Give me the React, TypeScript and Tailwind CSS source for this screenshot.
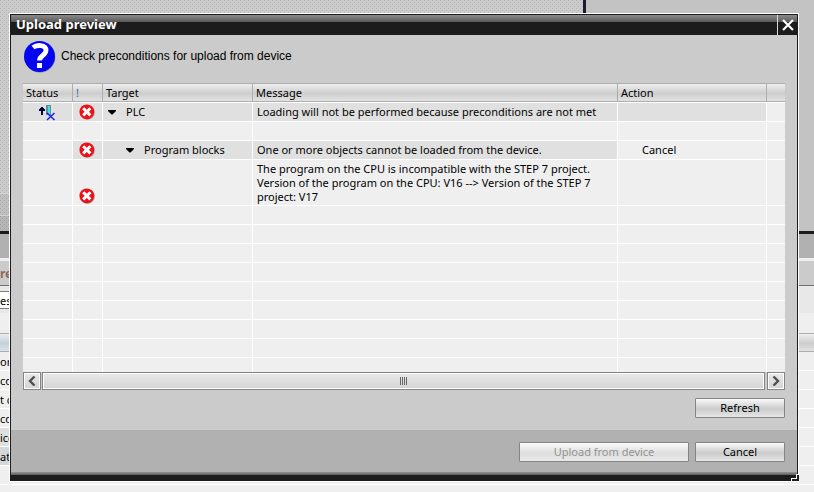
import React from "react";

const cellLine = "border-b border-r border-white";

function ErrorIcon() {
  return (
    <svg width="16" height="16" viewBox="0 0 16 16" role="img" aria-label="Error" className="block">
      <circle cx="8.5" cy="8.6" r="7.4" fill="#a9a9a9" />
      <circle cx="7.8" cy="7.8" r="7.4" fill="#ee1018" />
      <path d="M4.200 4.200l7.200 7.200M11.400 4.200l-7.200 7.200" stroke="#fff" strokeWidth="3" />
    </svg>
  );
}

function StatusIcon() {
  return (
    <svg width="17" height="17" viewBox="0 0 17 17" role="img" aria-label="Upload blocked" className="block">
      <path d="M2 3h2v1h1v1h1v2H4v4H2V7H0V5h1V4h1z" fill="#05053c" />
      <rect x="7" y="1" width="5" height="10" fill="#5f8f98" />
      <rect x="9" y="2" width="2" height="8" fill="#3fe0e8" />
      <path d="M8 9l7.500 7M15.500 9L8 16" stroke="#1d1de6" strokeWidth="1.500" />
    </svg>
  );
}

function Arrow() {
  return (
    <svg width="9" height="5" viewBox="0 0 9 5" aria-hidden="true" className="shrink-0">
      <path d="M0 0h8v1L4.500 4.500h-1L0 1z" fill="#000" />
    </svg>
  );
}

function Chevron({ right = false }: { right?: boolean }) {
  return (
    <svg width="8" height="10" viewBox="0 0 8 10" aria-hidden="true">
      <path d={right ? "M1.500 0.500L6 5 1.500 9.500" : "M6.500 0.500L2 5l4.500 4.500"} fill="none" stroke="#505050" strokeWidth="2.400" />
    </svg>
  );
}

type Item = {
  status?: boolean;
  error?: boolean;
  target?: string;
  nested?: boolean;
  message?: string;
  action?: string;
  shade?: "all" | "part";
  tall?: boolean;
};

const items: Item[] = [
  { status: true, error: true, target: "PLC", message: "Loading will not be performed because preconditions are not met", shade: "all" },
  {},
  { error: true, target: "Program blocks", nested: true, message: "One or more objects cannot be loaded from the device.", action: "Cancel", shade: "part" },
  {
    error: true,
    tall: true,
    message: "The program on the CPU is incompatible with the STEP 7 project.\nVersion of the program on the CPU: V16 --> Version of the STEP 7\nproject: V17",
  },
  {}, {}, {}, {}, {}, {}, {}, {}, {},
];

function Row({ item }: { item: Item }) {
  const shaded = item.shade ? "bg-[#e0e0e0]" : "";
  const whole = item.shade === "all" ? "bg-[#e0e0e0]" : "";
  return (
    <tr className={item.tall ? "h-[46px]" : "h-[19px]"}>
      <td className={`${cellLine} ${whole}`}>
        {item.status && <div className="flex h-[18px] items-center pl-4"><StatusIcon /></div>}
      </td>
      <td className={`${cellLine} ${shaded} align-bottom`}>
        {item.error && <div className="flex h-[18px] items-center pl-[6px]"><ErrorIcon /></div>}
      </td>
      <td className={`${cellLine} ${shaded}`}>
        {item.target && (
          <button type="button" aria-expanded="true" className={`flex h-[18px] items-center gap-[9px] whitespace-nowrap ${item.nested ? "pl-[23px]" : "pl-[5px]"}`}>
            <Arrow />
            {item.target}
          </button>
        )}
      </td>
      <td className={`${cellLine} ${shaded} overflow-hidden whitespace-pre pl-1 leading-[14px]`}>{item.message}</td>
      <td className={`${cellLine} ${whole} pl-6`}>{item.action}</td>
      <td className="border-b border-white" />
    </tr>
  );
}

const headCell =
  "border-y border-r border-[#aeaeae] bg-linear-to-b from-[#efefef] via-[#cdcdcd] via-55% to-[#e2e2e2] pt-px pl-[3px] text-left leading-4 font-normal";

function PreviewTable() {
  return (
    <div className="h-[289px] overflow-hidden bg-[#efefef]">
      <table className="w-full table-fixed border-separate border-spacing-0">
        <colgroup>
          <col className="w-[50px]" />
          <col className="w-[30px]" />
          <col className="w-[150px]" />
          <col />
          <col className="w-[149px]" />
          <col className="w-[18px]" />
        </colgroup>
        <thead>
          <tr className="h-[19px]">
            <th className={headCell}>Status</th>
            <th className={`${headCell} text-[#2f6ca8]`}>!</th>
            <th className={headCell}>Target</th>
            <th className={headCell}>Message</th>
            <th className={headCell}>Action</th>
            <th className="border-y border-[#aeaeae] bg-linear-to-b from-[#efefef] via-[#cdcdcd] via-55% to-[#e2e2e2]" />
          </tr>
        </thead>
        <tbody>
          <tr className="h-px">
            <td colSpan={6} className="bg-white" />
          </tr>
          {items.map((item, i) => (
            <Row key={i} item={item} />
          ))}
        </tbody>
      </table>
    </div>
  );
}

const scrollPart =
  "flex h-[18px] items-center justify-center border border-[#858585] bg-linear-to-b from-[#e9e9e9] to-[#d4d4d4] shadow-[inset_0_0_0_1px_#fff]";

const pushButton =
  "h-5 rounded-[1px] border border-[#858585] bg-linear-to-b from-[#fafafa] via-[#cbcbcb] via-55% to-[#e6e6e6] leading-[16px]";

const titleShade = "bg-[linear-gradient(#8d8a8c,#5a5a5a_7px,#1c1c1c_7px)]";

const backRows = [
  { text: "on", tone: "bg-[#efefef]" },
  { text: "co", tone: "bg-[#efefef]" },
  { text: "t c", tone: "bg-[#efefef]" },
  { text: "co", tone: "bg-[#efefef]" },
  { text: "ice", tone: "bg-[#e0dfe0]" },
  { text: "at", tone: "bg-[#d2d7db]" },
  { text: "", tone: "bg-[#efefef]" },
];

function Backdrop() {
  return (
    <div aria-hidden="true" className="absolute inset-0 flex flex-col overflow-hidden bg-[#efefef]">
      <div className="flex h-[231px] shrink-0 bg-[#c3c3c3]">
        <div className="flex w-[583px] flex-col bg-[#cbcbcb] bg-[conic-gradient(at_1px_1px,transparent_75%,#b2b2b2_0),conic-gradient(at_1px_1px,transparent_75%,#b2b2b2_0)] bg-size-[4px_4px] bg-position-[0_0,2px_2px]">
          <div className="h-[194px] border-b border-[#d8d8d8]" />
          <div className="h-[22px] border-b border-[#d2d2d2] bg-black/5" />
          <div className="grow bg-black/10" />
        </div>
        <div className="w-[3px] bg-[#1c1c2e]" />
      </div>
      <div className="h-[3px] shrink-0 bg-[#1c1c1c]" />
      <div className="h-6 shrink-0 bg-[#b1b1b1]" />
      <div className="h-[3px] shrink-0 bg-[#efefef]" />
      <div className="h-[25px] shrink-0 border-b border-[#707070] bg-[#cbcbcb] text-[12px] font-bold leading-[26px] text-[#8f6a5c]">re</div>
      <div className="flex h-[27px] shrink-0 items-center bg-[#e8e8e8]">
        <div className="h-[18px] w-20 border-y border-[#7d7d7d] bg-white leading-[17px]">es</div>
      </div>
      <div className="h-5 shrink-0" />
      <div className="flex h-[19px] shrink-0 border-y border-[#aeaeae] bg-linear-to-b from-[#efefef] via-[#cdcdcd] via-55% to-[#e2e2e2]">
        <div className="w-20 bg-linear-to-b from-[#e8eef2] via-[#c5d0d8] via-55% to-[#dbe4ea]" />
        <div className="grow" />
      </div>
      {backRows.map((row, i) => (
        <div key={i} className="flex h-[19px] shrink-0 border-b border-white">
          <div className={`w-20 leading-5 ${row.tone}`}>{row.text}</div>
        </div>
      ))}
    </div>
  );
}

export default function App() {
  return (
    <main className="relative min-h-screen overflow-hidden pt-[13px] pr-[15px] pb-[10px] pl-[9px] font-['Noto_Sans',sans-serif] text-[11px] text-black">
      <Backdrop />
      <section role="dialog" aria-labelledby="dialog-title" className="relative border border-white">
        <div className="border-x border-[#1c1c1c] bg-[#cbcbcb]">
          <header className="flex h-[21px] border-t border-[#1c1c1c]">
            <div className={`flex grow items-start pt-px pl-[5px] ${titleShade}`}>
              <h1 id="dialog-title" className="text-[13px] leading-4 font-bold text-white">Upload preview</h1>
            </div>
            <button type="button" aria-label="Close" className={`flex w-5 items-center justify-center border-l border-[#d8d8d8] ${titleShade}`}>
              <svg width="12" height="12" viewBox="0 0 12 12" aria-hidden="true">
                <path d="M1 1l10 10M11 1L1 11" stroke="#fff" strokeWidth="2.200" />
              </svg>
            </button>
          </header>
          <div className="px-3 pb-3">
            <div className="flex h-12 items-start gap-[5px] pt-[5px]">
              <svg width="33" height="33" viewBox="0 0 33 33" role="img" aria-label="Question" className="shrink-0">
                <circle cx="17" cy="17.500" r="15.300" fill="#999" />
                <circle cx="16.500" cy="16.500" r="15.500" fill="#0505f0" />
                <path d="M10 7.500C13.500 4.700 23 4.200 23 10.300c0 5.200-6.500 5.200-6.500 10.200" fill="none" stroke="#fff" strokeWidth="4.800" />
                <rect x="14" y="23" width="5" height="5" fill="#fff" />
              </svg>
              <p className="pt-2 font-['Liberation_Sans',sans-serif] text-[12px] leading-4">Check preconditions for upload from device</p>
            </div>
            <PreviewTable />
            <div className="flex gap-px">
              <button type="button" aria-label="Scroll left" className={`${scrollPart} w-[18px]`}><Chevron /></button>
              <div className={`${scrollPart} grow gap-px`}>
                <i className="h-2 w-px bg-[#666]" />
                <i className="h-2 w-px bg-[#666]" />
                <i className="h-2 w-px bg-[#666]" />
                <i className="h-2 w-px bg-[#666]" />
              </div>
              <button type="button" aria-label="Scroll right" className={`${scrollPart} ml-px w-[18px]`}><Chevron right /></button>
            </div>
            <div className="flex justify-end pt-2">
              <button type="button" className={`${pushButton} w-[90px]`}>Refresh</button>
            </div>
          </div>
          <footer className="flex h-[42px] items-start justify-end gap-[6px] bg-[#b1b1b1] px-3 pt-3">
            <button type="button" disabled className="h-5 w-[170px] rounded-[1px] border border-[#858585] bg-linear-to-b from-[#fafafa] via-[#dedede] via-55% to-[#e9e9e9] leading-[16px] text-[#939393]">Upload from device</button>
            <button type="button" className={`${pushButton} w-[90px]`}>Cancel</button>
          </footer>
          <div className="h-[3px] bg-linear-to-b from-[#969696] to-[#5c5c5c]" />
          <div className="h-[6px] bg-[#1c1c1c]" />
        </div>
        <svg width="8" height="8" viewBox="0 0 8 8" aria-hidden="true" className="absolute -right-px -bottom-px">
          <path d="M5 0h3v8H0V4h5z" fill="#fff" />
          <path d="M6 1h2v6H1V5h5z" fill="#1c1c1c" />
        </svg>
      </section>
    </main>
  );
}
